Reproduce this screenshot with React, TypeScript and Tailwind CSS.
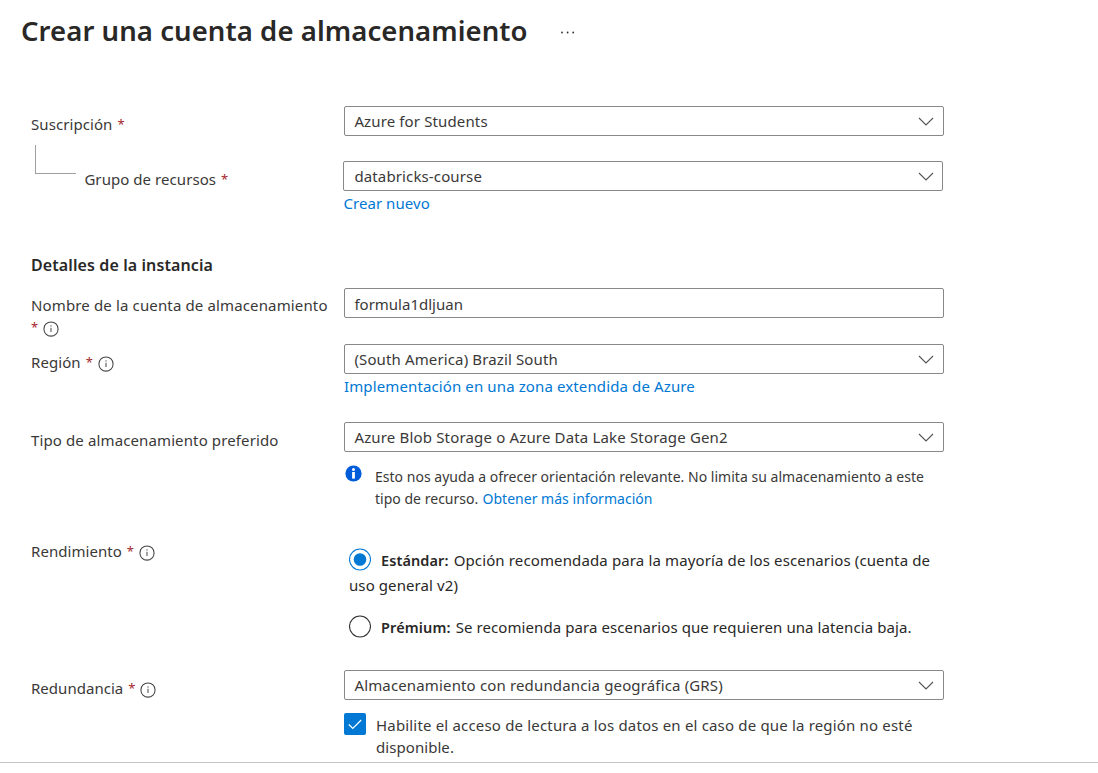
import type { ReactNode } from "react";

function InfoIcon() {
  return (
    <svg className="ml-[6px] mt-[4.5px] h-4 w-4 shrink-0" viewBox="0 0 16 16" fill="none">
      <circle cx="8" cy="8" r="7.1" stroke="#454443" strokeWidth="1.05" />
      <path d="M8 6.8v4.2" stroke="#454443" strokeWidth="1" />
      <circle cx="8" cy="4.9" r=".65" fill="#454443" />
    </svg>
  );
}

function Star({ className = "ml-[5px]" }: { className?: string }) {
  return <span className={`w-[6px] shrink-0 text-[13px] tracking-normal text-[#a4262c] ${className}`}>*</span>;
}

function Label({ children, className = "pt-[7px]" }: { children: ReactNode; className?: string }) {
  return <div className={`flex w-[313px] shrink-0 items-start whitespace-nowrap ${className}`}>{children}</div>;
}

function Select({ children, className = "tracking-[0.13px]", shift = "pl-[9.4px] pr-[9px]" }: { children: ReactNode; className?: string; shift?: string }) {
  return (
    <div className={`flex h-[30px] w-[600px] items-center justify-between rounded-[2px] border border-[#8a8886] leading-[28px] ${shift} ${className}`}>
      <span>{children}</span>
      <svg className="h-4 w-4" viewBox="0 0 16 16" fill="none">
        <path d="M1 5l7 7 7-7" stroke="#555453" strokeWidth="1.1" />
      </svg>
    </div>
  );
}

export default function App() {
  return (
    <div className="h-[773px] w-[1098px] overflow-hidden bg-white font-['Noto_Sans','Open_Sans',sans-serif] text-[15px] leading-[22px] tracking-[0.12px] text-[#3a3938]">
      <div className="flex h-[762px] flex-col">
        <header className="flex h-[106px] items-start pl-[21px] pt-[12px]">
          <h1 className="w-[540px] whitespace-nowrap pt-px text-[27.5px] font-semibold leading-[36px] tracking-[0.07px] text-[#292827]">
            Crear una cuenta de almacenamiento
          </h1>
          <svg className="mt-[19px] h-[3px] w-[14px]" viewBox="0 0 14 3" fill="#323130">
            <circle cx="1" cy="1.5" r=".9" />
            <circle cx="6.6" cy="1.5" r=".9" />
            <circle cx="12.2" cy="1.5" r=".9" />
          </svg>
        </header>

        <main className="flex flex-col pl-[31px]">
          <div className="flex h-[39px]">
            <Label>
              <span className="tracking-[0.07px]">Suscripción</span>
              <Star />
            </Label>
            <Select>Azure for Students</Select>
          </div>

          <div className="flex h-[109px]">
            <div className="flex w-[312px] shrink-0 pl-[4px]">
              <div className="h-[29px] w-[41px] border-b border-l border-[#a19f9d]" />
              <div className="flex pl-[8.4px] pt-[23px]">
                <span className="tracking-[0.06px]">Grupo de recursos</span>
                <Star />
              </div>
            </div>
            <div className="pt-[16px]">
              <Select shift="pr-[8px] pl-[10.4px]">databricks-course</Select>
              <a className="ml-[0.4px] mt-px block tracking-[0.06px] text-[#0078d4]">Crear nuevo</a>
            </div>
          </div>

          <h2 className="h-[34px] text-[16px] font-semibold tracking-[0.1px] text-[#292827]">Detalles de la instancia</h2>

          <div className="flex h-[56px]">
            <Label className="flex-wrap content-start pt-[6px]">
              <span className="w-full tracking-[0.14px]">Nombre de la cuenta de almacenamiento</span>
              <Star className="ml-0" />
              <InfoIcon />
            </Label>
            <div className="h-[30px] w-[600px] rounded-[2px] border border-[#8a8886] pl-[9.4px] pt-px leading-[28px] tracking-normal">formula1dljuan</div>
          </div>

          <div className="flex h-[78px]">
            <Label>
              <span className="tracking-[0.08px]">Región</span>
              <Star />
              <InfoIcon />
            </Label>
            <div>
              <Select>(South America) Brazil South</Select>
              <a className="mt-px block text-[#0078d4]">Implementación en una zona extendida de Azure</a>
            </div>
          </div>

          <div className="flex h-[118px]">
            <Label>Tipo de almacenamiento preferido</Label>
            <div>
              <Select className="tracking-[0.165px]">Azure Blob Storage o Azure Data Lake Storage Gen2</Select>
              <div className="flex pt-[13px]">
                <svg className="ml-px h-[17px] w-[17px] shrink-0" viewBox="0 0 17 17">
                  <circle cx="8.5" cy="8.5" r="8.1" fill="#015cda" />
                  <circle cx="8.5" cy="4.4" r="1.5" fill="#fff" />
                  <path d="M7.1 7h2.8v6.6H7.1z" fill="#fff" />
                </svg>
                <p className="ml-[13px] mt-px whitespace-nowrap text-[14px] tracking-[0.02px]">
                  Esto nos ayuda a ofrecer orientación relevante. No limita su almacenamiento a este
                  <br />
                  tipo de recurso. <a className="ml-[0.5px] text-[#0078d4]">Obtener más información</a>
                </p>
              </div>
            </div>
          </div>

          <div className="flex h-[130px]">
            <Label className="pt-0">
              <span className="tracking-[0.05px]">Rendimiento</span>
              <Star />
              <InfoIcon />
            </Label>
            <div className="whitespace-nowrap pl-[5px] pt-[8px] leading-[25px] text-[#292827]">
              <div className="flex">
                <svg className="h-[23px] w-[22px] shrink-0" viewBox="0 0 22 23" fill="none">
                  <circle cx="11" cy="11.5" r="10.5" stroke="#0078d4" strokeWidth="1.1" />
                  <circle cx="11" cy="11.5" r="6.3" fill="#0078d4" />
                </svg>
                <span className="ml-[10px] text-[14.5px] font-semibold tracking-[0.1px]">Estándar:</span>
                <span className="ml-[5px] tracking-[0.13px]">Opción recomendada para la mayoría de los escenarios (cuenta de</span>
              </div>
              <div className="tracking-[0.09px]">uso general v2)</div>
              <div className="flex pt-[17px]">
                <svg className="h-[23px] w-[22px] shrink-0" viewBox="0 0 22 23" fill="none">
                  <circle cx="11" cy="11.5" r="10.5" stroke="#323130" strokeWidth="1.1" />
                </svg>
                <span className="ml-[10px] text-[14.5px] font-semibold tracking-[0.13px]">Prémium:</span>
                <span className="ml-[5px] tracking-[0.085px]">Se recomienda para escenarios que requieren una latencia baja.</span>
              </div>
            </div>
          </div>

          <div className="flex">
            <Label>
              <span className="tracking-[0.03px]">Redundancia</span>
              <Star />
              <InfoIcon />
            </Label>
            <div>
              <Select className="tracking-[0.15px]">Almacenamiento con redundancia geográfica (GRS)</Select>
              <div className="flex pt-[13px]">
                <div className="flex h-[22px] w-[22px] shrink-0 items-center justify-center rounded-[2px] bg-[#0078d4]">
                  <svg className="h-[14px] w-[14px]" viewBox="0 0 14 14" fill="none">
                    <path d="M.8 7.5l4 4L13.2 3" stroke="#fff" strokeWidth="1.2" />
                  </svg>
                </div>
                <p className="ml-[10px] mt-px whitespace-nowrap tracking-[0.175px]">
                  Habilite el acceso de lectura a los datos en el caso de que la región no esté
                  <br />
                  <span className="tracking-[0.06px]">disponible.</span>
                </p>
              </div>
            </div>
          </div>
        </main>
      </div>
      <div className="h-px bg-[#c8c6c4]" />
    </div>
  );
}
